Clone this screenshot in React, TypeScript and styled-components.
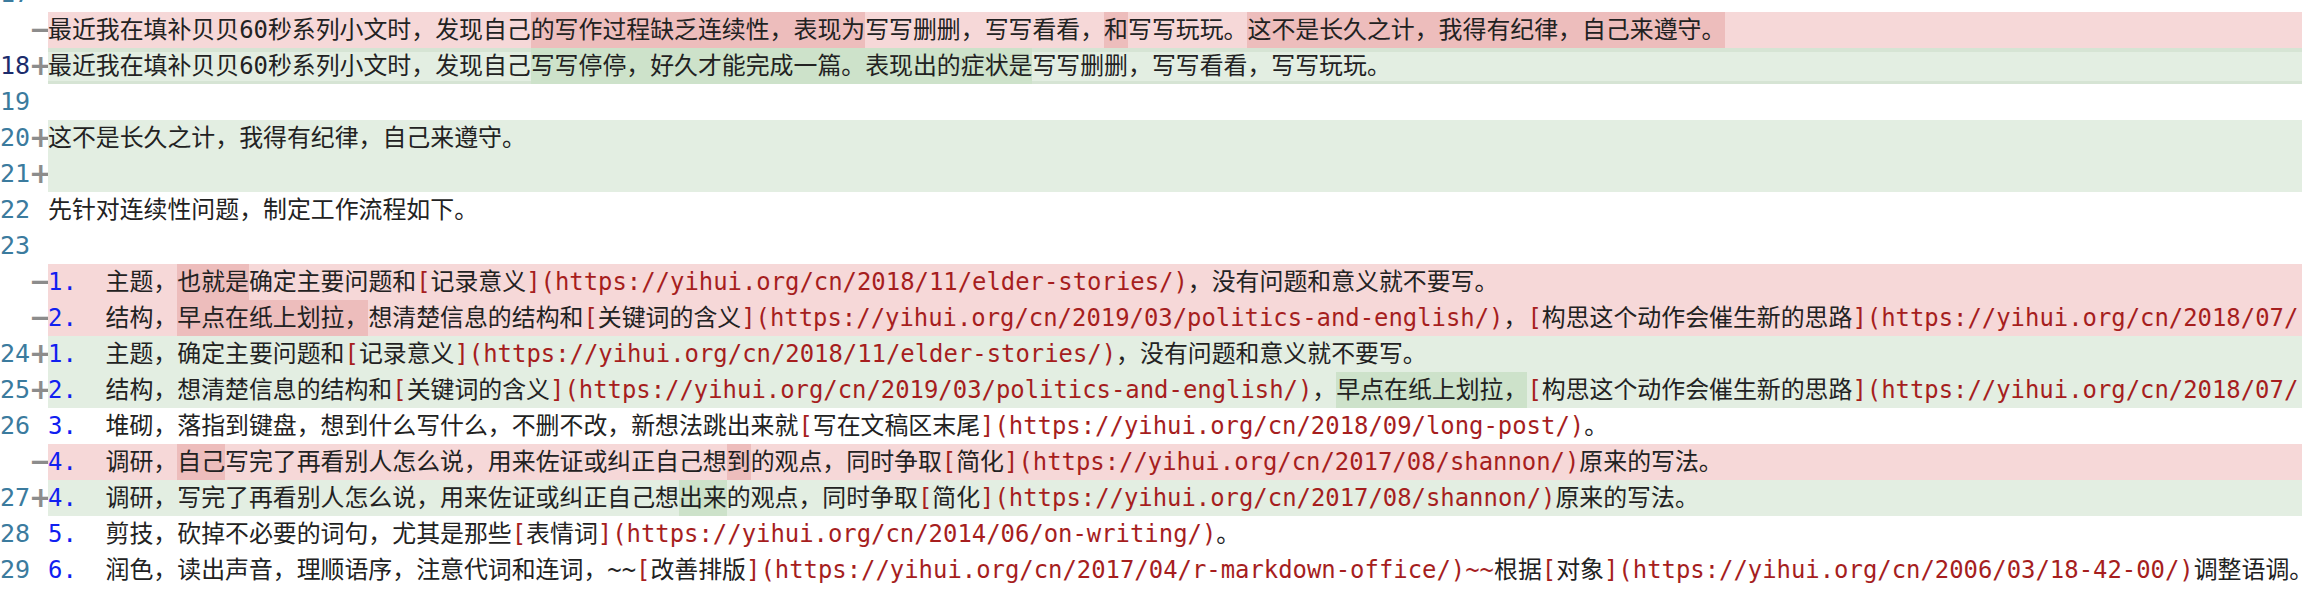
import React from 'react';
import styled, { createGlobalStyle } from 'styled-components';

type Kind = 'del' | 'add' | 'ctx';
type Seg = [string, ('hl' | 'red')?];

type Line = {
    no?: number;
    kind: Kind;
    num?: string;
    active?: boolean;
    segs: Seg[];
};

const lines: Line[] = [
    { no: 17, kind: 'ctx', segs: [] },
    {
        kind: 'del',
        segs: [
            ['最近我在填补贝贝60秒系列小文时，发现自己'],
            ['的写作过程缺乏连续性，表现为', 'hl'],
            ['写写删删，写写看看，'],
            ['和', 'hl'],
            ['写写玩玩。'],
            ['这不是长久之计，我得有纪律，自己来遵守。', 'hl'],
        ],
    },
    {
        no: 18,
        kind: 'add',
        active: true,
        segs: [
            ['最近我在填补贝贝60秒系列小文时，发现自己'],
            ['写写停停，好久才能完成一篇。表现出的症状是', 'hl'],
            ['写写删删，写写看看，写写玩玩。'],
        ],
    },
    { no: 19, kind: 'ctx', segs: [] },
    { no: 20, kind: 'add', segs: [['这不是长久之计，我得有纪律，自己来遵守。']] },
    { no: 21, kind: 'add', segs: [] },
    { no: 22, kind: 'ctx', segs: [['先针对连续性问题，制定工作流程如下。']] },
    { no: 23, kind: 'ctx', segs: [] },
    {
        kind: 'del',
        num: '1.',
        segs: [
            ['主题，'],
            ['也就是', 'hl'],
            ['确定主要问题和[记录意义](https://yihui.org/cn/2018/11/elder-stories/)，没有问题和意义就不要写。'],
        ],
    },
    {
        kind: 'del',
        num: '2.',
        segs: [
            ['结构，'],
            ['早点在纸上划拉，', 'hl'],
            ['想清楚信息的结构和[关键词的含义](https://yihui.org/cn/2019/03/politics-and-english/)，[构思这个动作会催生新的思路](https://yihui.org/cn/2018/07/'],
        ],
    },
    {
        no: 24,
        kind: 'add',
        num: '1.',
        segs: [['主题，确定主要问题和[记录意义](https://yihui.org/cn/2018/11/elder-stories/)，没有问题和意义就不要写。']],
    },
    {
        no: 25,
        kind: 'add',
        num: '2.',
        segs: [
            ['结构，想清楚信息的结构和[关键词的含义](https://yihui.org/cn/2019/03/politics-and-english/)，'],
            ['早点在纸上划拉，', 'hl'],
            ['[构思这个动作会催生新的思路](https://yihui.org/cn/2018/07/'],
        ],
    },
    {
        no: 26,
        kind: 'ctx',
        num: '3.',
        segs: [['堆砌，落指到键盘，想到什么写什么，不删不改，新想法跳出来就[写在文稿区末尾](https://yihui.org/cn/2018/09/long-post/)。']],
    },
    {
        kind: 'del',
        num: '4.',
        segs: [
            ['调研，'],
            ['自己', 'hl'],
            ['写完了再看别人怎么说，用来佐证或纠正自己想'],
            ['到', 'hl'],
            ['的观点，同时争取[简化](https://yihui.org/cn/2017/08/shannon/)原来的写法。'],
        ],
    },
    {
        no: 27,
        kind: 'add',
        num: '4.',
        segs: [
            ['调研，写完了再看别人怎么说，用来佐证或纠正自己想'],
            ['出来', 'hl'],
            ['的观点，同时争取[简化](https://yihui.org/cn/2017/08/shannon/)原来的写法。'],
        ],
    },
    {
        no: 28,
        kind: 'ctx',
        num: '5.',
        segs: [['剪技，砍掉不必要的词句，尤其是那些[表情词](https://yihui.org/cn/2014/06/on-writing/)。']],
    },
    {
        no: 29,
        kind: 'ctx',
        num: '6.',
        segs: [
            ['润色，读出声音，理顺语序，注意代词和连词，~~[改善排版](https://yihui.org/cn/2017/04/r-markdown-office/)'],
            ['~~', 'red'],
            ['根据[对象](https://yihui.org/cn/2006/03/18-42-00/)调整语调。'],
        ],
    },
    { no: 30, kind: 'ctx', segs: [] },
];

const rowBg = { del: '#f6d8d8', add: '#e3eee2', ctx: 'transparent' };
const hlBg = { del: '#edbdbc', add: '#cde2ca', ctx: 'transparent' };

const GlobalStyle = createGlobalStyle`
    html, body {
        margin: 0;
        padding: 0;
        background: #ffffff;
    }
    body {
        width: 2302px;
        height: 596px;
        overflow: hidden;
    }
`;

const Editor = styled.div`
    display: flex;
    flex-direction: column;
    margin-top: -24px;
    font-family: "DejaVu Sans Mono", "Noto Sans CJK SC", monospace;
    font-size: 23.9px;
    line-height: 36px;
    color: #222222;
`;

const Row = styled.div`
    display: flex;
    height: 36px;
    overflow: hidden;
`;

const LineNo = styled.span<{ $active?: boolean }>`
    flex: none;
    width: 29px;
    text-align: right;
    font-size: 25px;
    color: ${(p) => (p.$active ? '#1c2c6c' : '#3b7b9e')};
`;

const Marker = styled.span`
    flex: none;
    width: 19px;
    text-align: center;
    font-family: "DejaVu Sans", sans-serif;
    font-weight: bold;
    font-size: 28px;
    color: #8c8c8c;
`;

const Code = styled.div<{ $kind: Kind; $active?: boolean }>`
    flex: 1;
    white-space: pre;
    overflow: hidden;
    background: ${(p) => rowBg[p.$kind]};
    box-shadow: ${(p) => (p.$active ? 'inset 0 4px 0 #d6e4d4, inset 0 -3px 0 #d6e4d4' : 'none')};
`;

const Changed = styled.span<{ $kind: Kind }>`
    display: inline-block;
    height: 36px;
    vertical-align: top;
    background: ${(p) => hlBg[p.$kind]};
`;

const ListNum = styled.span`
    color: #1020f0;
`;

const Red = styled.span`
    color: #a61e1e;
`;

const LINK = /\[([^\]]*)\](\([^)]*\)?)/g;

function renderMd(text: string): React.ReactNode[] {
    const out: React.ReactNode[] = [];
    let last = 0;
    let i = 0;
    LINK.lastIndex = 0;
    let m: RegExpExecArray | null;
    while ((m = LINK.exec(text))) {
        if (m.index > last) out.push(<React.Fragment key={i++}>{text.slice(last, m.index)}</React.Fragment>);
        out.push(<Red key={i++}>[</Red>);
        out.push(<React.Fragment key={i++}>{m[1]}</React.Fragment>);
        out.push(<Red key={i++}>]{m[2]}</Red>);
        last = LINK.lastIndex;
    }
    if (last < text.length) out.push(<React.Fragment key={i++}>{text.slice(last)}</React.Fragment>);
    return out;
}

const DiffLine: React.FC<{ line: Line }> = ({ line }) => {
    const marker = line.kind === 'del' ? '−' : line.kind === 'add' ? '+' : '';
    return (
        <Row>
            <LineNo $active={line.active}>{line.no ?? ''}</LineNo>
            <Marker>{marker}</Marker>
            <Code $kind={line.kind} $active={line.active}>
                {line.num && <ListNum>{line.num}</ListNum>}
                {line.num && '  '}
                {line.segs.map(([text, style], i) => {
                    if (style === 'hl') return <Changed key={i} $kind={line.kind}>{renderMd(text)}</Changed>;
                    if (style === 'red') return <Red key={i}>{text}</Red>;
                    return <React.Fragment key={i}>{renderMd(text)}</React.Fragment>;
                })}
            </Code>
        </Row>
    );
};

const App: React.FC = () => {
    return (
        <>
            <GlobalStyle />
            <Editor>
                {lines.map((line, i) => (
                    <DiffLine key={i} line={line} />
                ))}
            </Editor>
        </>
    );
};

export default App;
